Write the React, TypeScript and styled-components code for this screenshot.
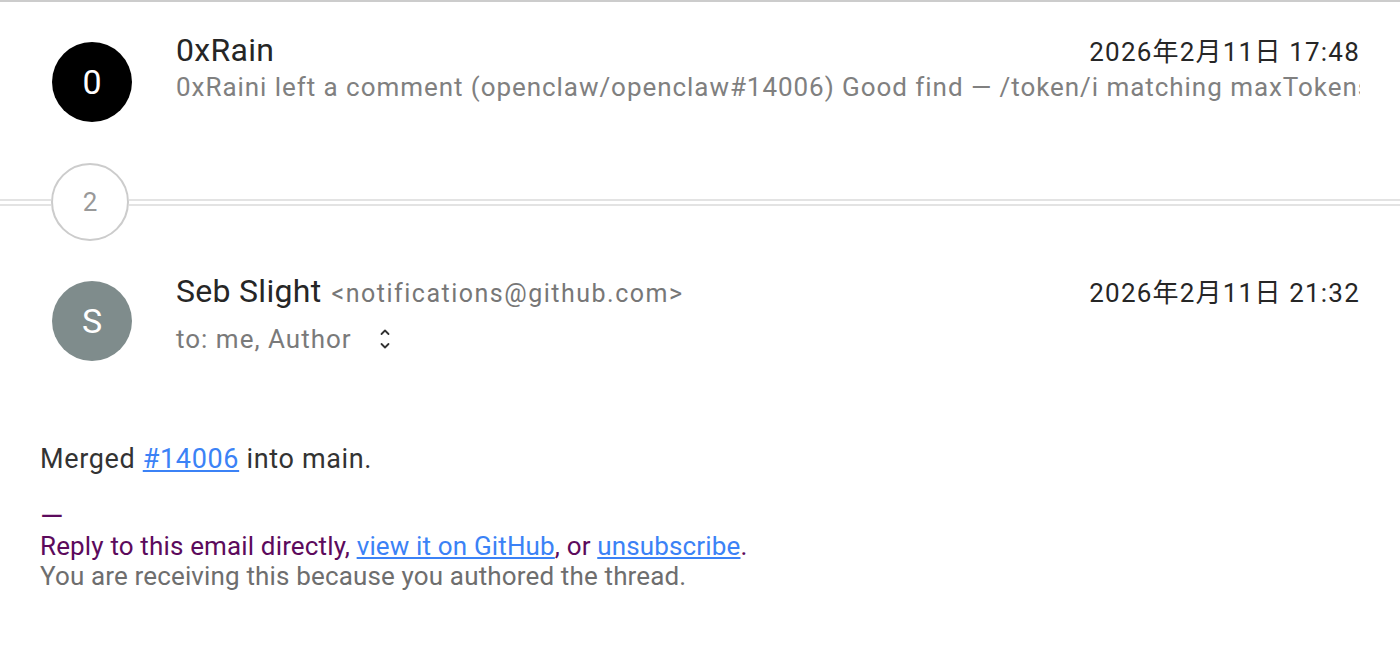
import React from "react";
import styled, { createGlobalStyle } from "styled-components";

const Global = createGlobalStyle`
  html, body { margin: 0; padding: 0; background: #fff; }
  body { font-family: Roboto, "Noto Sans CJK SC", sans-serif; color: #222; }
`;

const Page = styled.div`
  border-top: 2px solid #cccccc;
  min-height: 643px;
  background: #fff;
`;

const Header = styled.div<{ $top: number; $avatarTop: number }>`
  display: grid;
  grid-template-columns: 80px 1fr;
  column-gap: 44px;
  padding: ${(p) => p.$top}px 40px 0 52px;

  & > :first-child {
    margin-top: ${(p) => p.$avatarTop}px;
  }
`;

const Avatar = styled.div<{ $bg: string }>`
  width: 80px;
  height: 80px;
  border-radius: 50%;
  background: ${(p) => p.$bg};
  color: #fff;
  display: flex;
  align-items: center;
  justify-content: center;
  font-size: 34px;
`;

const Info = styled.div`
  min-width: 0;
  display: flex;
  flex-direction: column;
`;

const TopRow = styled.div`
  display: flex;
  align-items: baseline;
  justify-content: space-between;
  gap: 16px;
`;

const Sender = styled.div`
  display: flex;
  align-items: baseline;
  gap: 10px;
  white-space: nowrap;
`;

const Name = styled.span`
  font-size: 32px;
  line-height: 34px;
  color: #262626;
  letter-spacing: 0.3px;
`;

const Email = styled.span`
  font-size: 25px;
  letter-spacing: 1.5px;
  color: #777;
`;

const DateText = styled.span`
  font-size: 26px;
  letter-spacing: 1.2px;
  color: #262626;
  white-space: nowrap;
`;

const Snippet = styled.div`
  font-size: 26px;
  letter-spacing: 0.95px;
  line-height: 30px;
  color: #808080;
  white-space: nowrap;
  overflow: hidden;
  margin-top: 4px;
`;

const ToRow = styled.div`
  display: flex;
  align-items: center;
  gap: 27px;
  font-size: 26px;
  letter-spacing: 1px;
  line-height: 34px;
  color: #7a7a7a;
  margin-top: 13px;
`;

const Divider = styled.div`
  display: flex;
  align-items: center;
  margin-top: 41px;
`;

const Rule = styled.div<{ $w?: number }>`
  height: 3px;
  border-top: 2px solid #e3e3e3;
  border-bottom: 2px solid #e3e3e3;
  ${(p) => (p.$w ? `width: ${p.$w}px;` : "flex: 1;")}
`;

const Count = styled.div`
  width: 74px;
  height: 74px;
  border: 2px solid #cccccc;
  border-radius: 50%;
  background: #fff;
  color: #999;
  font-size: 26px;
  display: flex;
  align-items: center;
  justify-content: center;
`;

const Body = styled.div`
  padding: 82px 40px 0 40px;
  color: #333;
`;

const Para = styled.p`
  margin: 0;
  font-size: 27px;
  letter-spacing: 0.65px;
  line-height: 32px;
`;

const Link = styled.a`
  color: #3b82f6;
  text-decoration: underline;
`;

const Footer = styled.div`
  margin-top: 26px;
  font-size: 26px;
  letter-spacing: 0.15px;
  line-height: 30px;
`;

const Purple = styled.div`
  color: #5c0a5c;
`;

const Gray = styled.div`
  color: #6e6e6e;
`;

const Dash = styled.div`
  color: #5c0a5c;
  font-size: 30px;
  line-height: 30px;
`;

const UpDown = () => (
  <svg width="12" height="22" viewBox="0 0 12 22" fill="none" stroke="#333" strokeWidth="1.8" strokeLinecap="round" strokeLinejoin="round">
    <polyline points="2.5,6 6,2.5 9.5,6" />
    <polyline points="2.5,16 6,19.5 9.5,16" />
  </svg>
);

export default function App() {
  return (
    <>
      <Global />
      <Page>
        <Header $top={29} $avatarTop={11}>
          <Avatar $bg="#000">0</Avatar>
          <Info>
            <TopRow>
              <Sender>
                <Name>0xRain</Name>
              </Sender>
              <DateText>2026年2月11日 17:48</DateText>
            </TopRow>
            <Snippet>
              0xRaini left a comment (openclaw/openclaw#14006) Good find — /token/i matching maxTokens and other token-related keys in the config
            </Snippet>
          </Info>
        </Header>

        <Divider>
          <Rule $w={51} />
          <Count>2</Count>
          <Rule />
        </Divider>

        <Header $top={31} $avatarTop={9}>
          <Avatar $bg="#7f8c8c">S</Avatar>
          <Info>
            <TopRow>
              <Sender>
                <Name>Seb Slight</Name>
                <Email>&lt;notifications@github.com&gt;</Email>
              </Sender>
              <DateText>2026年2月11日 21:32</DateText>
            </TopRow>
            <ToRow>
              <span>to: me, Author</span>
              <UpDown />
            </ToRow>
          </Info>
        </Header>

        <Body>
          <Para>
            Merged <Link href="#">#14006</Link> into main.
          </Para>
          <Footer>
            <Dash>—</Dash>
            <Purple>
              Reply to this email directly, <Link href="#">view it on GitHub</Link>, or{" "}
              <Link href="#">unsubscribe</Link>.
            </Purple>
            <Gray>You are receiving this because you authored the thread.</Gray>
          </Footer>
        </Body>
      </Page>
    </>
  );
}
